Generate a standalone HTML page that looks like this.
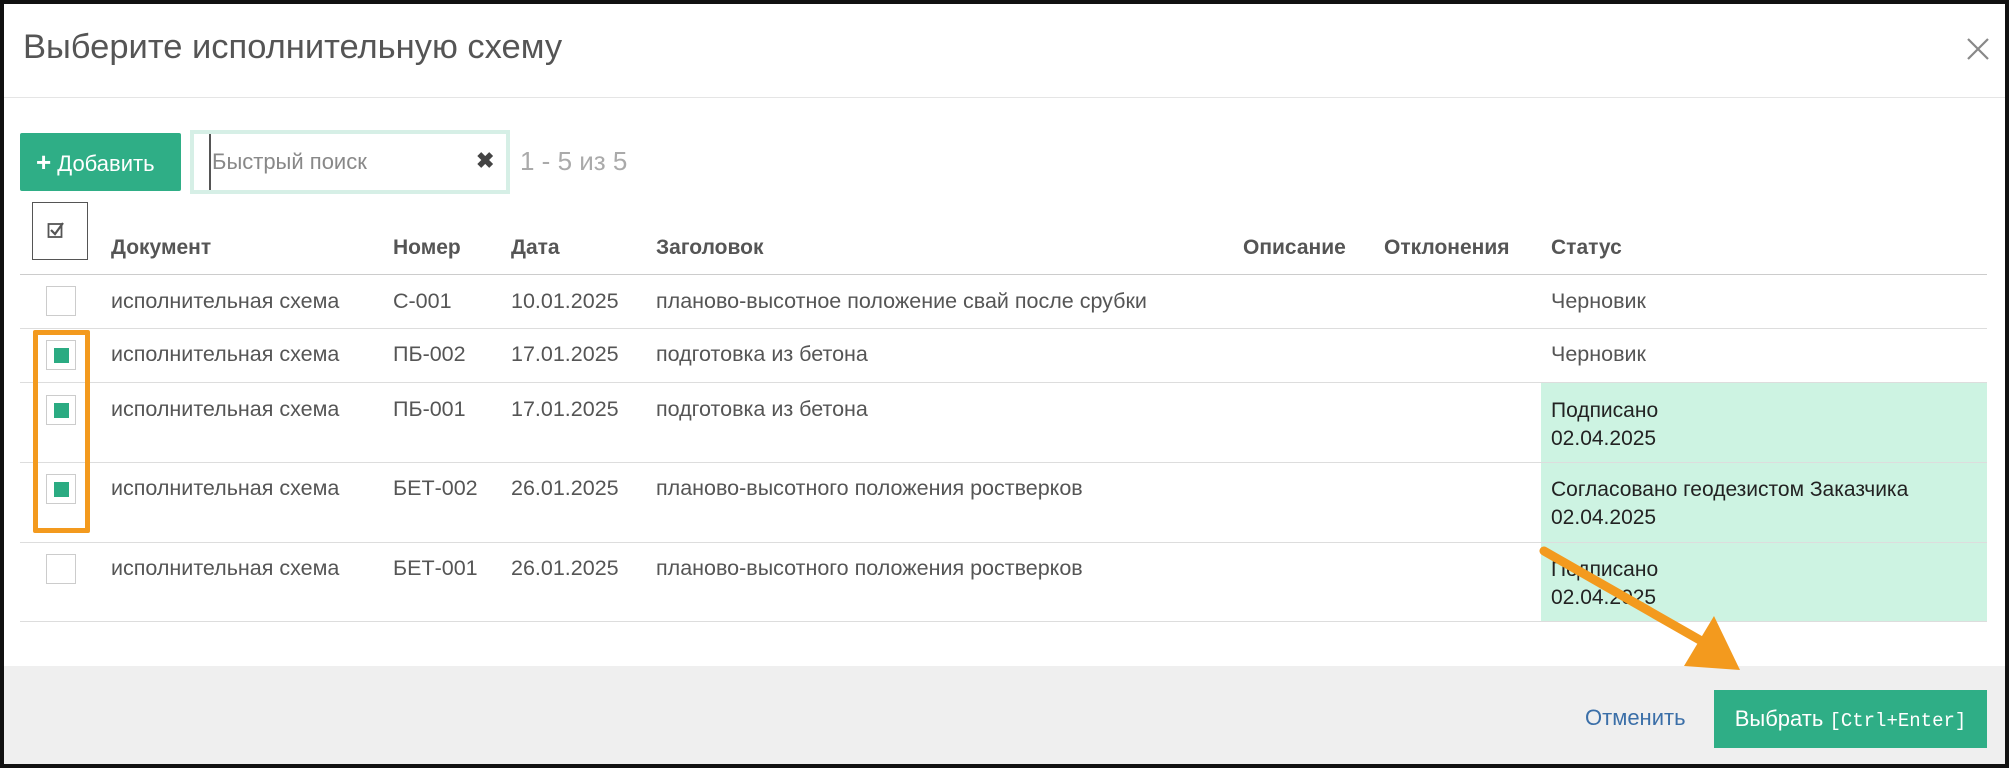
<!DOCTYPE html>
<html><head><meta charset="utf-8"><style>
*{box-sizing:border-box;margin:0;padding:0}
body{width:2009px;height:768px;overflow:hidden;background:#fff;font-family:"Liberation Sans",sans-serif;position:relative}
.frame{position:absolute;left:0;top:0;width:2009px;height:768px;border:4px solid #111;}
.a{position:absolute;white-space:nowrap}
.t{font-size:21.5px;color:#555}
.h{font-size:21px;color:#555;font-weight:bold}
.line{position:absolute;left:20px;width:1967px;height:1px;background:#ddd}
.cb{position:absolute;left:46px;width:30px;height:30px;border:1px solid #ccc;background:#fff}
.cb.on::after{content:"";position:absolute;left:7px;top:7px;width:15px;height:15px;background:#2bab82}
.green{position:absolute;left:1541px;width:446px;background:#cdf3e2}
.s{font-size:21px;color:#222}
</style></head><body>
<div class="a" style="left:23px;top:28px;font-size:34.5px;color:#555">Выберите исполнительную схему</div>
<svg class="a" style="left:1966px;top:37px" width="24" height="24"><path d="M2 2L22 22M22 2L2 22" stroke="#888" stroke-width="2.2"/></svg>
<div class="a" style="left:4px;top:97px;width:2001px;height:1px;background:#e5e5e5"></div>

<div class="a" style="left:20px;top:133px;width:161px;height:58px;background:#2fae86;border-radius:2px;color:#fff;font-size:22px;line-height:58px;padding-left:16px"><b style="font-size:26px">+</b> Добавить</div>
<div class="a" style="left:190px;top:130px;width:320px;height:64px;border:4px solid #d6efe6;background:#fff"><div class="a" style="left:15px;top:0;line-height:56px;font-size:22px;color:#888;border-left:2px solid #555;padding-left:1px">Быстрый поиск</div><div class="a" style="left:282px;top:14px;font-size:22px;color:#444;font-weight:bold">✖</div></div>
<div class="a" style="left:520px;top:146px;font-size:26px;color:#aaa">1 - 5 из 5</div>

<div class="a" style="left:32px;top:202px;width:56px;height:58px;border:1px solid #555"><svg style="position:absolute;left:14px;top:17px" width="20" height="20"><rect x="1.5" y="4" width="13" height="13" fill="none" stroke="#555" stroke-width="1.8"/><path d="M4 10l4 4 8-11" fill="none" stroke="#555" stroke-width="2.2"/></svg></div>
<div class="a h" style="left:111px;top:236px">Документ</div>
<div class="a h" style="left:393px;top:236px">Номер</div>
<div class="a h" style="left:511px;top:236px">Дата</div>
<div class="a h" style="left:656px;top:236px">Заголовок</div>
<div class="a h" style="left:1243px;top:236px">Описание</div>
<div class="a h" style="left:1384px;top:236px">Отклонения</div>
<div class="a h" style="left:1551px;top:236px">Статус</div>

<div class="green" style="top:383px;height:238px"></div>
<div class="line" style="top:274px;background:#ccc"></div>
<div class="line" style="top:328px"></div>
<div class="line" style="top:382px"></div>
<div class="line" style="top:462px"></div>
<div class="line" style="top:542px"></div>
<div class="line" style="top:621px"></div>

<div class="cb" style="top:286px"></div>
<div class="cb on" style="top:340px"></div>
<div class="cb on" style="top:395px"></div>
<div class="cb on" style="top:474px"></div>
<div class="cb" style="top:554px"></div>

<div class="a t" style="left:111px;top:289px">исполнительная схема</div><div class="a t" style="left:393px;top:289px">С-001</div><div class="a t" style="left:511px;top:289px">10.01.2025</div><div class="a t" style="left:656px;top:289px">планово-высотное положение свай после срубки</div><div class="a t" style="left:1551px;top:289px">Черновик</div>
<div class="a t" style="left:111px;top:342px">исполнительная схема</div><div class="a t" style="left:393px;top:342px">ПБ-002</div><div class="a t" style="left:511px;top:342px">17.01.2025</div><div class="a t" style="left:656px;top:342px">подготовка из бетона</div><div class="a t" style="left:1551px;top:342px">Черновик</div>
<div class="a t" style="left:111px;top:397px">исполнительная схема</div><div class="a t" style="left:393px;top:397px">ПБ-001</div><div class="a t" style="left:511px;top:397px">17.01.2025</div><div class="a t" style="left:656px;top:397px">подготовка из бетона</div><div class="a s" style="left:1551px;top:397px;line-height:28px">Подписано<br>02.04.2025</div>
<div class="a t" style="left:111px;top:476px">исполнительная схема</div><div class="a t" style="left:393px;top:476px">БЕТ-002</div><div class="a t" style="left:511px;top:476px">26.01.2025</div><div class="a t" style="left:656px;top:476px">планово-высотного положения ростверков</div><div class="a s" style="left:1551px;top:476px;line-height:28px">Согласовано геодезистом Заказчика<br>02.04.2025</div>
<div class="a t" style="left:111px;top:556px">исполнительная схема</div><div class="a t" style="left:393px;top:556px">БЕТ-001</div><div class="a t" style="left:511px;top:556px">26.01.2025</div><div class="a t" style="left:656px;top:556px">планово-высотного положения ростверков</div><div class="a s" style="left:1551px;top:556px;line-height:28px">Подписано<br>02.04.2025</div>

<div class="a" style="left:33px;top:330px;width:57px;height:203px;border:5px solid #f39a1e;border-radius:2px"></div>

<div class="a" style="left:4px;top:666px;width:2001px;height:98px;background:#efefef"></div>
<div class="a" style="left:1585px;top:705px;font-size:22px;color:#3b6fa8">Отменить</div>
<div class="a" style="left:1714px;top:690px;width:273px;height:58px;background:#2fae86;color:#fff;line-height:58px;font-size:22px;text-align:center">Выбрать <span style="font-family:'Liberation Mono',monospace;font-size:19px">[Ctrl+Enter]</span></div>

<svg class="a" style="left:0;top:0" width="2009" height="768"><line x1="1544" y1="551" x2="1705" y2="643" stroke="#f39a1e" stroke-width="9" stroke-linecap="round"/><polygon points="1740,670 1684,666 1714,616" fill="#f39a1e"/></svg>
<div class="frame"></div>
</body></html>
